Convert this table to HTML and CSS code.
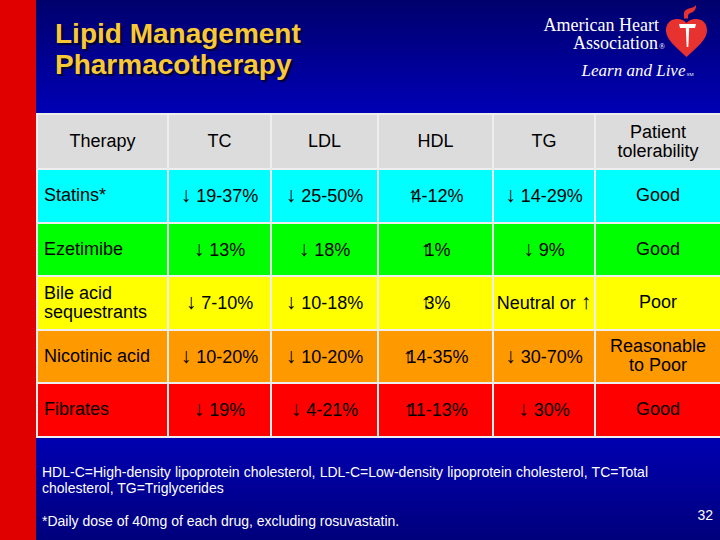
FILE: index.html
```html
<!DOCTYPE html>
<html lang="en">
<head>
<meta charset="utf-8">
<title>Lipid Management Pharmacotherapy</title>
<link rel="stylesheet" href="styles.css">
</head>
<body>
<div class="slide">
  <div class="strip"></div>
  <div class="main">
    <header class="top">
      <h1 class="title">Lipid Management<br>Pharmacotherapy</h1>
      <div class="logo">
        <div class="logo-row">
          <div class="logo-name">
            <span>American Heart</span>
            <span>Association<span class="reg">®</span></span>
          </div>
          <svg class="heart" width="44" height="56" viewBox="0 0 44 56">
            <path fill="#e8322f" d="M22.5 20 C19 15.5 12 15 7 17.5 C3 20 2 24 2 28 C2.5 37 12 44 22.5 54 C33 44 42.5 37 43 28 C43 24 42 20 38 17.5 C33 15 26 15.5 22.5 20 Z"/>
            <path fill="#e8322f" d="M20 15.5 L20 10 C21 6.5 24 5.5 27 5 C29 4.5 31 3.5 32 2 C32.5 6 30 9 26.5 10 C25 10.5 24 11.5 24 13 L24 15.5 Z"/>
            <path fill="#ffffff" d="M15 21 L32 21 L31 25 L16 25 Z"/>
            <path fill="#ffffff" d="M21.8 25 L25.2 25 L24.3 44 L22.7 44 Z"/>
          </svg>
        </div>
        <div class="tagline">Learn and Live<span class="sm">SM</span></div>
      </div>
    </header>

    <table class="grid">
      <colgroup>
        <col class="c1"><col class="c2"><col class="c3"><col class="c4"><col class="c5"><col class="c6">
      </colgroup>
      <thead>
        <tr class="head">
          <th>Therapy</th><th>TC</th><th>LDL</th><th>HDL</th><th>TG</th><th>Patient<br>tolerability</th>
        </tr>
      </thead>
      <tbody>
        <tr class="r-cyan">
          <td class="name">Statins*</td>
          <td><span class="dn">↓</span> 19-37%</td><td><span class="dn">↓</span> 25-50%</td><td><span class="up">↑</span>4-12%</td><td><span class="dn">↓</span> 14-29%</td><td>Good</td>
        </tr>
        <tr class="r-green">
          <td class="name">Ezetimibe</td>
          <td><span class="dn">↓</span> 13%</td><td><span class="dn">↓</span> 18%</td><td><span class="up">↑</span>1%</td><td><span class="dn">↓</span> 9%</td><td>Good</td>
        </tr>
        <tr class="r-yellow">
          <td class="name">Bile acid<br>sequestrants</td>
          <td><span class="dn">↓</span> 7-10%</td><td><span class="dn">↓</span> 10-18%</td><td><span class="up">↑</span>3%</td><td>Neutral or <span class="dn">↑</span></td><td>Poor</td>
        </tr>
        <tr class="r-orange">
          <td class="name">Nicotinic acid</td>
          <td><span class="dn">↓</span> 10-20%</td><td><span class="dn">↓</span> 10-20%</td><td><span class="up">↑</span>14-35%</td><td><span class="dn">↓</span> 30-70%</td><td>Reasonable<br>to Poor</td>
        </tr>
        <tr class="r-red">
          <td class="name">Fibrates</td>
          <td><span class="dn">↓</span> 19%</td><td><span class="dn">↓</span> 4-21%</td><td><span class="up">↑</span>11-13%</td><td><span class="dn">↓</span> 30%</td><td>Good</td>
        </tr>
      </tbody>
    </table>

    <footer class="notes">
      <div class="note-text">
        <p class="abbr">HDL-C=High-density lipoprotein cholesterol, LDL-C=Low-density lipoprotein cholesterol, TC=Total cholesterol, TG=Triglycerides</p>
        <p class="dose">*Daily dose of 40mg of each drug, excluding rosuvastatin.</p>
      </div>
      <div class="page">32</div>
    </footer>
  </div>
</div>
</body>
</html>
```
FILE: styles.css
```css
html, body {
  margin: 0;
  padding: 0;
}

body {
  width: 720px;
  height: 540px;
  overflow: hidden;
  font-family: "Liberation Sans", Arial, sans-serif;
}

.slide {
  display: flex;
  width: 720px;
  height: 540px;
  background: linear-gradient(180deg, #00006c 0%, #0000b2 20%, #0000c4 50%, #0000ae 82%, #00007c 100%);
}

.strip {
  width: 36px;
  flex: none;
  background: #e00000;
}

.main {
  flex: 1;
  display: flex;
  flex-direction: column;
  min-width: 0;
}

/* ---------- header ---------- */
.top {
  display: flex;
  justify-content: space-between;
  align-items: flex-start;
  height: 113px;
  flex: none;
  box-sizing: border-box;
  padding: 0 12px 0 19px;
}

.title {
  margin: 0;
  padding-top: 18px;
  font-family: "Liberation Sans", Arial, sans-serif;
  font-weight: bold;
  font-size: 28px;
  line-height: 31px;
  color: #f9c935;
  text-shadow: 2px 2px 1px #000030;
}

.logo {
  display: flex;
  flex-direction: column;
  padding-top: 3px;
  color: #ffffff;
  font-family: "Liberation Serif", "Times New Roman", serif;
}

.logo-row {
  display: flex;
  align-items: flex-start;
}

.logo-name {
  display: flex;
  flex-direction: column;
  align-items: flex-end;
  margin-top: 14px;
  margin-right: 5px;
  font-size: 18px;
  line-height: 17.5px;
}

.reg {
  font-size: 8px;
  margin-left: 1px;
  margin-right: -6px;
}

.heart {
  display: block;
  flex: none;
}

.tagline {
  margin-left: 38px;
  margin-top: 2px;
  font-style: italic;
  font-size: 17px;
  line-height: 20px;
}

.sm {
  font-style: normal;
  font-size: 5px;
  margin-left: 1px;
}

/* ---------- table ---------- */
.grid {
  width: 100%;
  border-collapse: collapse;
  table-layout: fixed;
  font-family: "Liberation Sans", Arial, sans-serif;
  font-size: 18px;
  line-height: 19px;
  color: #000000;
}

.c1 { width: 131px; }
.c2 { width: 103px; }
.c3 { width: 107px; }
.c4 { width: 115px; }
.c5 { width: 102px; }
.c6 { width: 126px; }

.grid th,
.grid td {
  border: 2px solid #eeeeee;
  padding: 0 2px;
  text-align: center;
  vertical-align: middle;
  font-weight: normal;
}

.grid th {
  height: 53px;
  background: #dcdcdc;
}

.grid td {
  height: 51.5px;
}

.grid td.name {
  text-align: left;
  padding-left: 6px;
}

.dn {
  font-size: 21px;
  line-height: 19px;
}

.up {
  display: inline-block;
  width: 4px;
  white-space: nowrap;
  font-size: 21px;
  line-height: 19px;
}

.r-cyan td   { background: #00ffff; }
.r-green td  { background: #00ff00; }
.r-yellow td { background: #ffff00; }
.r-orange td { background: #ff9900; }
.r-red td    { background: #ff0000; color: #000000; }

/* ---------- footnotes ---------- */
.notes {
  flex: 1;
  display: flex;
  justify-content: space-between;
  padding: 26px 7px 0 6px;
  color: #ffffff;
  font-size: 14px;
  line-height: 16px;
}

.note-text {
  width: 606px;
}

.note-text p {
  margin: 0;
}

.note-text .abbr {
  text-align: justify;
}

.note-text .dose {
  margin-top: 17px;
}

.page {
  align-self: flex-end;
  margin-bottom: 17px;
}
```
